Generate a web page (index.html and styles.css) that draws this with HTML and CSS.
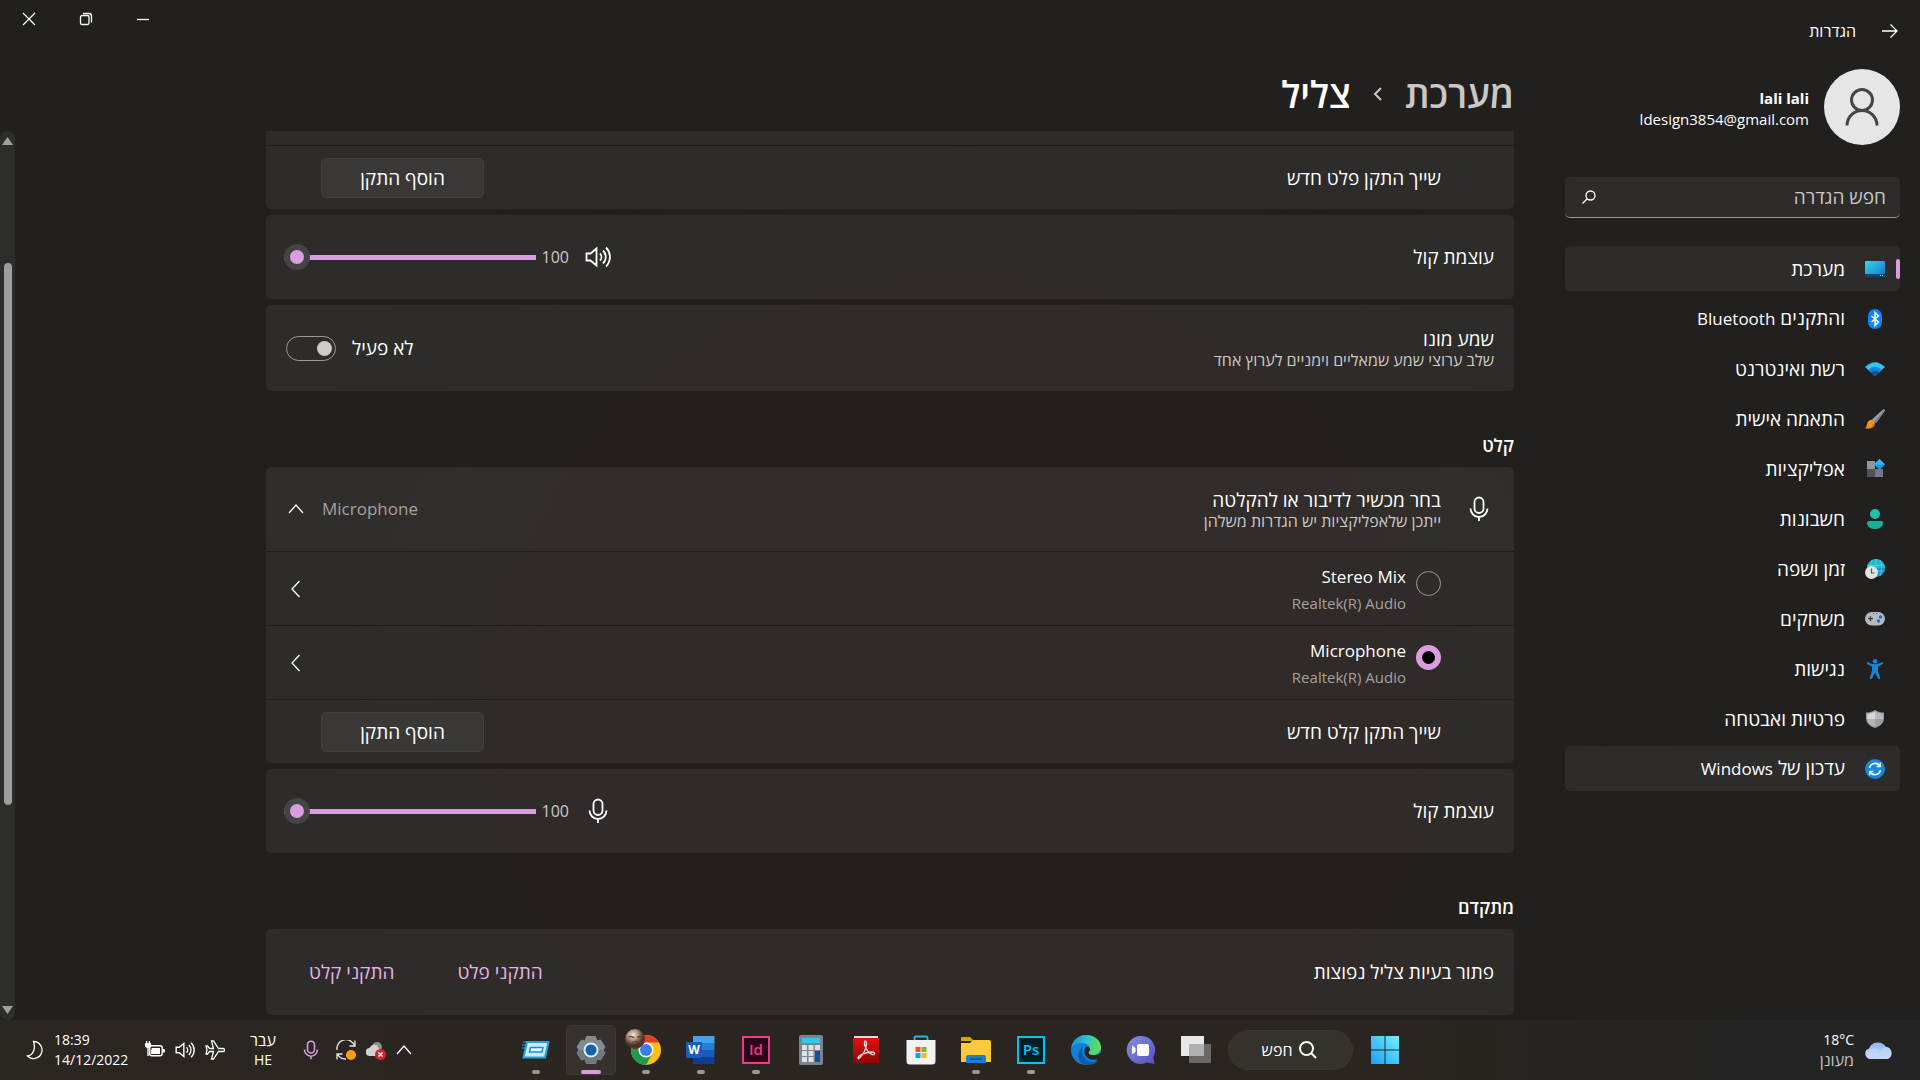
FILE: index.html
```html
<!DOCTYPE html>
<html lang="he" dir="rtl">
<head>
  <meta charset="UTF-8" />
  <title>הגדרות</title>
  <link rel="stylesheet" href="styles.css">
</head>
<body>
  <!-- shared icons -->
  <svg class="defs" width="0" height="0" aria-hidden="true">
    <symbol id="i-mic" viewBox="0 0 26 26">
      <rect x="8.5" y="1.5" width="9" height="15.5" rx="4.5" />
      <path d="M4.5 12.5a8.5 8.5 0 0 0 17 0M13 21v4" />
    </symbol>
    <symbol id="i-speaker" viewBox="0 0 26 26">
      <path d="M1.5 9.5v7h4l6 5V4.5l-6 5zM15 9.5a5 5 0 0 1 0 7M18 6.500a9 9 0 0 1 0 13M21 3.500a13.500 13.500 0 0 1 0 19" />
    </symbol>
    <symbol id="i-left" viewBox="0 0 16 18">
      <path d="M11.500 1 4 9l7.500 8" />
    </symbol>
    <symbol id="i-up" viewBox="0 0 16 16">
      <path d="M1 12l7-8 7 8" />
    </symbol>
  </svg>

  <header class="titlebar">
    <div class="app-title">
      <button class="plain" aria-label="חזרה"><svg class="line" width="16" height="16" viewBox="0 0 16 16"><path d="M0 8h15M8.500 1.500 15 8l-6.500 6.500" /></svg></button>
      <span>הגדרות</span>
    </div>
    <div class="win-buttons">
      <button class="plain" aria-label="מזער"><svg class="line" width="14" height="14" viewBox="0 0 14 14"><path d="M1 7.500h12" /></svg></button>
      <button class="plain" aria-label="שחזר"><svg class="line" width="14" height="14" viewBox="0 0 14 14"><rect x="1.500" y="3.500" width="8.500" height="9" rx="1.500" /><path d="M4 1.500h6a2.500 2.500 0 0 1 2.500 2.500v6.500" /></svg></button>
      <button class="plain" aria-label="סגור"><svg class="line" width="14" height="14" viewBox="0 0 14 14"><path d="M1 1l12 12M13 1 1 13" /></svg></button>
    </div>
  </header>

  <div class="layout">
    <!-- תפריט צד -->
    <aside class="sidebar">
      <div class="profile">
        <div class="avatar">
          <svg width="36" height="40" viewBox="0 0 36 40" fill="none" stroke="#454545" stroke-width="3"><circle cx="18" cy="13" r="10.500" /><path d="M3 38.500a15 15 0 0 1 30 0" /></svg>
        </div>
        <div class="profile-text">
          <div class="profile-name">lali lali</div>
          <div class="profile-mail">ldesign3854@gmail.com</div>
        </div>
      </div>

      <div class="search">
        <input type="text" placeholder="חפש הגדרה" aria-label="חפש הגדרה" />
        <svg class="line" width="14" height="14" viewBox="0 0 14 14"><circle cx="8.500" cy="5.500" r="4.500" /><path d="M5.200 8.800.500 13.500" /></svg>
      </div>

      <nav class="menu">
        <a href="#" class="menu-item active">
          <svg width="20" height="20" viewBox="0 0 20 20"><defs><linearGradient id="g-sys" x1="0" y1="0" x2="1" y2="1"><stop offset="0" stop-color="#35dce8" /><stop offset="1" stop-color="#1170c4" /></linearGradient></defs><rect y="2" width="20" height="16" rx="1" fill="url(#g-sys)" /><path d="M0 15h20v2a1 1 0 0 1-1 1H1a1 1 0 0 1-1-1z" fill="#0e4570" /><path d="M15 16h1v1h-1zM17 16h1v1h-1z" fill="#5fd0f0" /></svg>
          <span>מערכת</span>
        </a>
        <a href="#" class="menu-item">
          <svg width="20" height="20" viewBox="0 0 20 20"><rect x="3" width="14" height="20" rx="7" fill="#0a84ff" /><path d="M6.500 7 13.500 13l-3.500 3.500v-13L13.500 7l-7 6" fill="none" stroke="#fff" stroke-width="1.500" /></svg>
          <span>והתקנים <bdi class="en">Bluetooth</bdi></span>
        </a>
        <a href="#" class="menu-item">
          <svg width="20" height="20" viewBox="0 0 20 20"><path d="M0 8Q10-1.500 20 8L10 17z" fill="#35c3f3" /><path d="M3.200 11Q10 4.500 16.800 11L10 17z" fill="#1487d8" /><path d="M6 13.500q4-3.500 8 0L10 17z" fill="#0b52a0" /></svg>
          <span>רשת ואינטרנט</span>
        </a>
        <a href="#" class="menu-item">
          <svg width="20" height="20" viewBox="0 0 20 20"><path d="M18 .5c1.500-.8 2.500.3 1.500 1.800L11 14l-4-3.500z" fill="#9aa1a8" /><path d="M19.500 2.300 11 14l-1.800-1.600L19 .8z" fill="#7c838a" /><path d="M8.500 11.500c2.500 2.500 1.500 6.500-2 7.500-2 .6-4.500.8-6.500 0 2-.7 1.500-2 2-4 .8-3.200 4-5.500 6.500-3.500z" fill="#f5921e" /><path d="M8 14c.5 2-1 4-4 4.800 2.500.3 5-.8 5.500-3z" fill="#e0601a" /></svg>
          <span>התאמה אישית</span>
        </a>
        <a href="#" class="menu-item">
          <svg width="20" height="20" viewBox="0 0 20 20"><path d="M2 2h8v8H2z" fill="#9097a0" /><path d="M2 10h8v8H2z" fill="#505358" /><path d="M10 10h8v8h-8z" fill="#757b83" /><path d="M14.500 0 20 5.500 14.500 11 9 5.500z" fill="#1b9ae8" /><path d="M14.500 0 20 5.500H9z" fill="#35b5f0" /></svg>
          <span>אפליקציות</span>
        </a>
        <a href="#" class="menu-item">
          <svg width="20" height="20" viewBox="0 0 20 20"><circle cx="10" cy="5" r="5" fill="#22c0a8" /><path d="M3.500 12h13A1.500 1.500 0 0 1 18 13.500C18 17.500 15 20 10 20s-8-2.500-8-6.500A1.500 1.500 0 0 1 3.500 12z" fill="#16b09a" /></svg>
          <span>חשבונות</span>
        </a>
        <a href="#" class="menu-item">
          <svg width="20" height="20" viewBox="0 0 20 20"><circle cx="11" cy="9" r="9" fill="#1795cf" /><path d="M11 0a9 9 0 0 0-9 9h18a9 9 0 0 0-9-9z" fill="#20b8cd" /><path d="M11 0v18M2.500 6.500h17M2.500 12h17M7 1c-2 5-2 11 0 16M15 1c2 5 2 11 0 16" fill="none" stroke="#53d6e8" stroke-width=".7" /><circle cx="6.500" cy="13.500" r="6.500" fill="#e4e4e4" /><path d="M6.500 9.500V14h3" fill="none" stroke="#555" stroke-width="1.200" /></svg>
          <span>זמן ושפה</span>
        </a>
        <a href="#" class="menu-item">
          <svg width="20" height="20" viewBox="0 0 20 20"><rect y="3" width="20" height="13.500" rx="6.700" fill="#b4bac0" /><path d="M3 9.700h5M5.500 7.200v5" stroke="#3a3d42" stroke-width="1.300" /><circle cx="15.500" cy="8" r="1.700" fill="#1272cf" /><circle cx="13.500" cy="12" r="1.700" fill="#1272cf" /><path d="M8 4.500h1.200M11 4.500h1.200" stroke="#555" /></svg>
          <span>משחקים</span>
        </a>
        <a href="#" class="menu-item">
          <svg width="20" height="20" viewBox="0 0 20 20" fill="#1287dc"><circle cx="10" cy="2.200" r="2.200" /><path d="M2.500 3c3 1.500 5 2.200 7.500 2.200S14.500 4.500 17.500 3c.8.300.9 1.500.2 2L13 7.500V12l2.200 7c0 1.200-1.700 1.200-2.200.5L10 13.500 7 19.500c-.5.700-2.200.7-2.200-.5L7 12V7.500L2.300 5c-.7-.5-.6-1.700.2-2z" /></svg>
          <span>נגישות</span>
        </a>
        <a href="#" class="menu-item">
          <svg width="20" height="20" viewBox="0 0 20 20"><path d="M10 1c3 2 5.500 2.500 9 2.500V9c0 5-4 8.500-9 10-5-1.500-9-5-9-10V3.500C4.500 3.500 7 3 10 1z" fill="#9ba0a5" /><path d="M10 2.500c2.500 1.700 5 2.200 7.700 2.300V10H10z" fill="#b5babe" /><path d="M10 2.500C7.500 4.200 5 4.700 2.300 4.800V10H10z" fill="#d5d8db" /><path d="M10 10v7.600C6 16.300 2.600 13.500 2.300 10z" fill="#b2b6ba" /></svg>
          <span>פרטיות ואבטחה</span>
        </a>
        <a href="#" class="menu-item hover">
          <svg width="20" height="20" viewBox="0 0 20 20"><circle cx="10" cy="10" r="10" fill="#1189de" /><path d="M4.500 9A5.700 5.700 0 0 1 15 7.200M15.500 11A5.700 5.700 0 0 1 5 12.800" fill="none" stroke="#fff" stroke-width="1.500" /><path d="M15.300 3.800v3.700h-3.700M4.700 16.200v-3.700h3.700" fill="none" stroke="#fff" stroke-width="1.300" /></svg>
          <span>עדכון של <bdi class="en">Windows</bdi></span>
        </a>
      </nav>
    </aside>

    <!-- תוכן -->
    <main class="content">
      <h1 class="crumbs">
        <a href="#">מערכת</a>
        <svg width="10" height="14" viewBox="0 0 10 14"><path d="M8 1 2 7l6 6" fill="none" stroke="#c9c8c7" stroke-width="2" /></svg>
        <span>צליל</span>
      </h1>

      <div class="scroll-area">
        <section class="card cut">
          <div class="row sliver"></div>
          <div class="row short inset">
            <span>שייך התקן פלט חדש</span>
            <button class="btn">הוסף התקן</button>
          </div>
        </section>

        <section class="card">
          <div class="row">
            <label for="out-volume">עוצמת קול</label>
            <div class="volume">
              <svg class="line bold" width="26" height="26"><use href="#i-speaker" /></svg>
              <span class="volume-value">100</span>
              <input type="range" id="out-volume" min="0" max="100" value="100" />
            </div>
          </div>
        </section>

        <section class="card">
          <div class="row tall">
            <label for="mono" class="texts">
              <span>שמע מונו</span>
              <small>שלב ערוצי שמע שמאליים וימניים לערוץ אחד</small>
            </label>
            <div class="switch">
              <span>לא פעיל</span>
              <input type="checkbox" id="mono" />
            </div>
          </div>
        </section>

        <h2>קלט</h2>

        <section class="card">
          <div class="row lighter">
            <div class="device-head">
              <svg class="line bold" width="26" height="26"><use href="#i-mic" /></svg>
              <div class="texts">
                <span>בחר מכשיר לדיבור או להקלטה</span>
                <small>ייתכן שלאפליקציות יש הגדרות משלהן</small>
              </div>
            </div>
            <button class="plain expander">
              <span class="en">Microphone</span>
              <svg class="line" width="16" height="16"><use href="#i-up" /></svg>
            </button>
          </div>
          <div class="row device inset">
            <label class="radio">
              <input type="radio" name="input-device" />
              <span class="radio-text en">Stereo Mix<small>Realtek(R) Audio</small></span>
            </label>
            <button class="plain" aria-label="Stereo Mix"><svg class="line" width="16" height="18"><use href="#i-left" /></svg></button>
          </div>
          <div class="row device inset">
            <label class="radio">
              <input type="radio" name="input-device" checked />
              <span class="radio-text en">Microphone<small>Realtek(R) Audio</small></span>
            </label>
            <button class="plain" aria-label="Microphone"><svg class="line" width="16" height="18"><use href="#i-left" /></svg></button>
          </div>
          <div class="row short inset">
            <span>שייך התקן קלט חדש</span>
            <button class="btn">הוסף התקן</button>
          </div>
        </section>

        <section class="card">
          <div class="row">
            <label for="in-volume">עוצמת קול</label>
            <div class="volume">
              <svg class="line bold" width="26" height="26"><use href="#i-mic" /></svg>
              <span class="volume-value">100</span>
              <input type="range" id="in-volume" min="0" max="100" value="100" />
            </div>
          </div>
        </section>

        <h2>מתקדם</h2>

        <section class="card">
          <div class="row tall">
            <span>פתור בעיות צליל נפוצות</span>
            <div class="links">
              <a href="#">התקני פלט</a>
              <a href="#">התקני קלט</a>
            </div>
          </div>
        </section>
      </div>
    </main>

    <div class="scrollbar">
      <svg width="11" height="8" viewBox="0 0 11 8"><path d="M5.500 0 11 8H0z" /></svg>
      <div class="scroll-track"><div class="scroll-thumb"></div></div>
      <svg width="11" height="8" viewBox="0 0 11 8"><path d="M5.500 8 11 0H0z" /></svg>
    </div>
  </div>

  <!-- שורת המשימות -->
  <footer class="taskbar">
    <div class="weather">
      <svg width="30" height="20" viewBox="0 0 30 20"><defs><linearGradient id="g-cloud" x1="0" y1="0" x2="0" y2="1"><stop offset="0" stop-color="#8fb4f2" /><stop offset="1" stop-color="#cfddf8" /></linearGradient></defs><path d="M6 19a5.500 5.500 0 0 1-1-10.500A9.500 9.500 0 0 1 22 7a6.300 6.300 0 0 1 1.500 12z" fill="url(#g-cloud)" /><path d="M8 9c4-1 7 0 9 3 1-3 3-5 6-5a6.300 6.300 0 0 1 .5 12H6A5.500 5.500 0 0 1 3 9.500z" fill="#c3d5f7" opacity=".7" /></svg>
      <div>
        <div>18°C</div>
        <div class="dim">מעונן</div>
      </div>
    </div>

    <div class="apps">
      <button class="app" aria-label="התחל"><svg width="30" height="30" viewBox="0 0 30 30"><defs><linearGradient id="g-win" x1="1" y1="0" x2="0" y2="1"><stop offset="0" stop-color="#74f0ff" /><stop offset="1" stop-color="#1a9dfc" /></linearGradient></defs><path d="M1 1h13.500v13.500H1zM15.500 1H29v13.500H15.500zM1 15.500h13.500V29H1zM15.500 15.500H29V29H15.500z" fill="url(#g-win)" /></svg></button>
      <button class="task-search"><svg width="20" height="20" viewBox="0 0 20 20" fill="none" stroke="#fff" stroke-width="2"><circle cx="8.500" cy="8.500" r="6.500" /><path d="m13.300 13.300 4.700 4.700" /></svg><span>חפש</span></button>
      <button class="app" aria-label="תצוגת משימות"><svg width="30" height="30" viewBox="0 0 30 30"><path d="M8 9h22v19H8z" fill="#686868" /><path d="M0 1h23v20H0z" fill="#e8e8e8" /><path d="M8 9h15v12H8z" fill="#b0b0b0" /></svg></button>
      <button class="app" aria-label="צ'אט"><svg width="30" height="30" viewBox="0 0 30 30"><defs><linearGradient id="g-chat" x1="0" y1="0" x2="1" y2="1"><stop offset="0" stop-color="#8292dc" /><stop offset="1" stop-color="#5a4fc4" /></linearGradient></defs><path d="M15 1a14 14 0 1 0 6 26.500l7.500 1.500-1.200-7A14 14 0 0 0 15 1z" fill="url(#g-chat)" /><rect x="11" y="9" width="12" height="12" rx="2" fill="#fff" /><path d="M6 10.500 9.500 13v4L6 19.500z" fill="#fff" /></svg></button>
      <button class="app" aria-label="Edge"><svg width="30" height="30" viewBox="0 0 30 30"><defs><linearGradient id="g-edge" x1="0" y1=".3" x2="1" y2=".5"><stop offset="0" stop-color="#1c8ed8" /><stop offset=".5" stop-color="#33c3c8" /><stop offset="1" stop-color="#69e048" /></linearGradient></defs><circle cx="15" cy="15" r="15" fill="#1280d6" /><path d="M0 14C1 5 8 0 15 0c9 0 15 6 15 12 0 5-4 8-8 8-3 0-5-1-5-2s2-1.500 2-4c0-3-3-6-8-6-6 0-10 3-11 6z" fill="url(#g-edge)" /><path d="M12 12c-3 7 2 15 10 15 3 0 5-1 6-2-3 4-7 5-11 5-7 0-12-7-9-13 1-3 2-4 4-5z" fill="#0d5aa8" /><path d="M16.500 11.500c2 .5 2.800 2 2.500 3.500-.3 1.200-1.800 2-1.500 3 1 2.500 6 3.500 12.500 0v-1l2 9-3-1c1-1.500 1-2-.5-1.300-4 1.800-9 1.500-12-1-3.500-3-4-8-2-10.200.6-.7 1.300-1 2-1z" fill="#29241f" /></svg></button>
      <button class="app" aria-label="Photoshop"><svg width="28" height="28" viewBox="0 0 28 28"><rect x="1" y="1" width="26" height="26" fill="#001d26" stroke="#00c3f5" stroke-width="2" /><text x="14" y="19" text-anchor="middle" class="logo-text" fill="#00c3f5">Ps</text></svg><i class="dot"></i></button>
      <button class="app" aria-label="סייר הקבצים"><svg width="30" height="28" viewBox="0 0 30 28"><path d="M0 2a1 1 0 0 1 1-1h8l4 4H0z" fill="#e0a008" /><path d="M0 7h9l3-3h16a2 2 0 0 1 2 2v20H0z" fill="#ffc937" /><path d="M5 27v-6a2 2 0 0 1 2-2h16a2 2 0 0 1 2 2v6z" fill="#1480d6" /><path d="M9 23h12" stroke="#0b4f94" stroke-width="1.500" /></svg><i class="dot"></i></button>
      <button class="app" aria-label="Store"><svg width="30" height="30" viewBox="0 0 30 30"><path d="M8.500 6V3A1.500 1.500 0 0 1 10 1.500h10A1.500 1.500 0 0 1 21.500 3v3" fill="none" stroke="#2ab2ea" stroke-width="2" /><path d="M.5 5h29v21a3.500 3.500 0 0 1-3.500 3.500H4A3.500 3.500 0 0 1 .5 26z" fill="#f2f2f2" /><path d="M9.500 12h5v5h-5z" fill="#f05125" /><path d="M15.500 12h5v5h-5z" fill="#7fbb0a" /><path d="M9.500 18h5v5h-5z" fill="#05a6f0" /><path d="M15.500 18h5v5h-5z" fill="#fdb90b" /></svg></button>
      <button class="app" aria-label="Acrobat"><svg width="28" height="28" viewBox="0 0 28 28"><defs><linearGradient id="g-pdf" x1="0" y1="0" x2="0" y2="1"><stop offset="0" stop-color="#e31212" /><stop offset="1" stop-color="#8c0505" /></linearGradient></defs><path d="M2 0h24v3H2z" fill="#ddd" /><path d="M1 2h26v25H1z" fill="url(#g-pdf)" /><path d="M13 5c3 0 1 8-1.500 12S6 24 6 22c0-3 9-6 14-6 4 0 3 3 .5 2.500C16 17.500 11 9 13 5z" fill="none" stroke="#f3dada" stroke-width="1.300" /></svg></button>
      <button class="app" aria-label="מחשבון"><svg width="24" height="30" viewBox="0 0 24 30"><rect width="24" height="30" rx="2" fill="#7b858f" /><path d="M3 3h18v5H3z" fill="#36c5ee" /><path d="M3 10h5v5H3zM9.500 10h5v5h-5zM16 10h5v5h-5zM3 16h5v5H3zM9.500 16h5v5h-5zM3 22h5v5H3zM9.500 22h5v5h-5z" fill="#dde1e5" /><path d="M16 16h5v11h-5z" fill="#17509a" /></svg></button>
      <button class="app" aria-label="InDesign"><svg width="28" height="28" viewBox="0 0 28 28"><rect x="1" y="1" width="26" height="26" fill="#2b0417" stroke="#f0398a" stroke-width="2" /><text x="14" y="19" text-anchor="middle" class="logo-text" fill="#f0398a">Id</text></svg><i class="dot"></i></button>
      <button class="app" aria-label="Word"><svg width="30" height="28" viewBox="0 0 30 28"><path d="M7 0h21.500v7H7z" fill="#41a5ee" /><path d="M7 7h21.500v7H7z" fill="#2b7cd3" /><path d="M7 14h21.500v7H7z" fill="#185abd" /><path d="M7 21h21.500v7H7z" fill="#103f91" /><rect y="6" width="16" height="16" rx="1" fill="#1b5bbd" /><text x="8" y="18" text-anchor="middle" class="logo-text word" fill="#fff">W</text></svg><i class="dot"></i></button>
      <button class="app" aria-label="Chrome"><svg width="42" height="42" viewBox="0 0 42 42"><circle cx="21" cy="21" r="15" fill="#fbc116" /><path d="M8 13.500a15 15 0 0 1 26 0H21L14.500 25z" fill="#e33b2e" /><path d="M8 13.500A15 15 0 0 0 21 36l6.500-11.500h-12z" fill="#229a4c" /><circle cx="21" cy="21" r="7.500" fill="#fff" /><circle cx="21" cy="21" r="6" fill="#3b7de8" /><defs><radialGradient id="g-face" cx=".4" cy=".3"><stop offset="0" stop-color="#f3ead2" /><stop offset=".5" stop-color="#b09a80" /><stop offset="1" stop-color="#4c342a" /></radialGradient></defs><circle cx="10" cy="10" r="10" fill="url(#g-face)" /><path d="M4 8q3-1.500 5 1M12 8q3-1 5 0M7 14q4-3 9 0" stroke="#6a4236" stroke-width="1.500" fill="none" /></svg><i class="dot"></i></button>
      <button class="app current" aria-label="הגדרות"><svg width="30" height="30" viewBox="0 0 30 30"><path d="M10.500 1.500h9l1.500 4.500 3.500-1L29 12l-2 3 2 3-4.500 7-3.500-1-1.500 4.500h-9L9 24l-3.500 1L1 18l2-3-2-3 4.500-7L9 6z" fill="#838b93" stroke="#838b93" stroke-linejoin="round" /><path d="M1 18l2-3h24l2 3-4.500 7-3.500-1-1.500 4.500h-9L9 24l-3.500 1z" fill="#6f777f" /><circle cx="15" cy="15" r="7.500" fill="#e8e8e8" /><circle cx="15" cy="15" r="5.500" fill="#0f62ac" /></svg><i class="dot"></i></button>
      <button class="app" aria-label="הפעלה"><svg width="28" height="20" viewBox="0 0 28 20"><path d="M1 2h6M0 5h5M0 8h5" stroke="#35a7d8" /><path d="M5 2h21.500L23 17.500H1.500z" fill="#c6ecfa" stroke="#23a3dc" stroke-width="2" /><path d="M8.500 7.500h12.500l-1 4.500H7.500z" fill="#e6f8fd" stroke="#1f8fc6" stroke-width="1.500" /></svg><i class="dot"></i></button>
    </div>

    <div class="tray">
      <div class="tray-icons">
        <button class="plain" aria-label="סמלים מוסתרים"><svg class="line" width="16" height="16"><use href="#i-up" /></svg></button>
        <svg width="20" height="20" viewBox="0 0 20 20"><circle cx="11" cy="7" r="5" fill="#8e8e8e" /><path d="M4 16a4 4 0 0 1-.5-8A5 5 0 0 1 12 6.500L16 16z" fill="#d2d2d2" /><circle cx="14.500" cy="14.500" r="5.500" fill="#d8232e" /><path d="m12.500 12.500 4 4M16.500 12.500l-4 4" stroke="#fff" stroke-width="1.400" /></svg>
        <svg width="20" height="20" viewBox="0 0 20 20"><path d="M1 10A9 9 0 0 1 18.500 6M19 .5v5.500h-5.500M10 19a9 9 0 0 1-8.500-5M1 19.500V14h5.500" fill="none" stroke="#e8e8e8" stroke-width="1.300" /><circle cx="15" cy="15" r="5" fill="#ff9d0a" /></svg>
      </div>
      <svg class="line pink" width="20" height="20"><use href="#i-mic" /></svg>
      <div class="lang"><div>עבר</div><div class="lang-code">HE</div></div>
      <button class="plain status" aria-label="הגדרות מהירות">
        <svg class="line" width="20" height="20" viewBox="0 0 20 20"><path d="M18 8.500h-4.500L8.500 1H6.500l2 7.500h-4L2.500 6H1l1 4-1 4h1.500l2-2.500h4l-2 7.500h2l5-7.500H18c2.200 0 2.200-3 0-3z" /></svg>
        <svg class="line bold" width="20" height="20"><use href="#i-speaker" /></svg>
        <svg width="20" height="18" viewBox="0 0 20 18"><rect x="4.700" y="4.700" width="12.500" height="10" rx="2" fill="none" stroke="#fff" stroke-width="1.400" /><path d="M7 7h8v6H6V9zM18 8h1a1 1 0 0 1 1 1v1.500a1 1 0 0 1-1 1h-1zM1 0h1.200v2h1.600V0H5v2h1v2.500C6 6 5 7 3.700 7v8H2.300V7C1 7 0 6 0 4.500V2h1z" fill="#fff" /></svg>
      </button>
      <div class="notify">
        <div class="clock"><div>18:39</div><div>14/12/2022</div></div>
        <svg class="line" width="18" height="20" viewBox="0 0 18 20"><path d="M7.500 1.500A8.500 8.500 0 1 1 1.500 16C7 15 10 9 7.500 1.500z" /></svg>
      </div>
    </div>
  </footer>
</body>
</html>
```
FILE: styles.css
```css
* {
  box-sizing: border-box;
}

body {
  margin: 0;
  height: 100vh;
  display: flex;
  flex-direction: column;
  overflow: hidden;
  background: radial-gradient(ellipse 38% 62% at 50% 66%, #241f1c 0%, #241f1c 55%, #21201e 100%);
  color: #fff;
  font-family: "Open Sans", "Noto Sans", sans-serif;
  font-size: 19px;
  line-height: 24px;
}

a {
  color: inherit;
  text-decoration: none;
}

button,
input {
  font: inherit;
  color: inherit;
  margin: 0;
}

small {
  font-size: 16px;
  line-height: 20px;
  color: #cbc9c8;
}

/* טקסט באנגלית */
.en {
  font-size: 17px;
}

.en small {
  font-size: 15px;
}

.defs {
  position: absolute;
}

.plain {
  display: flex;
  align-items: center;
  padding: 0;
  border: 0;
  background: none;
}

.line {
  fill: none;
  stroke: #fff;
  stroke-width: 1.3;
  flex: none;
}

.line.bold {
  stroke-width: 1.8;
}

.line.pink {
  stroke: #dc9de0;
  stroke-width: 2;
}

/* כותרת החלון */
.titlebar {
  display: flex;
  justify-content: space-between;
  height: 62px;
  flex: none;
}

.app-title {
  display: flex;
  align-items: center;
  gap: 26px;
  padding-right: 22px;
  font-size: 16px;
}

.win-buttons {
  display: flex;
  height: 38px;
}

.win-buttons .plain {
  width: 57px;
  justify-content: center;
}

.layout {
  display: flex;
  flex: 1;
  min-height: 0;
}

/* תפריט צד */
.sidebar {
  width: 335px;
  margin-right: 20px;
  flex: none;
}

.profile {
  display: flex;
  align-items: center;
  gap: 15px;
  height: 90px;
}

.avatar {
  display: flex;
  align-items: center;
  justify-content: center;
  width: 76px;
  height: 76px;
  border-radius: 50%;
  background: #e6e6e6;
}

.profile-text {
  direction: ltr;
  padding-top: 4px;
  text-align: right;
  font-size: 15px;
  line-height: 21px;
}

.profile-name {
  font-weight: 700;
}

.search {
  display: flex;
  align-items: center;
  height: 41px;
  margin: 25px 0 28px;
  padding: 0 14px 0 17px;
  border-radius: 5px;
  border-bottom: 1px solid #9a9a98;
  background: #2d2c2a;
}

.search input {
  flex: 1;
  min-width: 0;
  padding: 0;
  border: 0;
  outline: 0;
  background: none;
}

.search input::placeholder {
  color: #c9c8c6;
  opacity: 1;
}

.menu {
  display: flex;
  flex-direction: column;
  gap: 5px;
}

.menu-item {
  display: flex;
  align-items: center;
  gap: 20px;
  height: 45px;
  padding-right: 15px;
  border-radius: 5px;
}

.menu-item.active,
.menu-item.hover {
  background: #2d2c2a;
}

.menu-item.active {
  position: relative;
}

.menu-item.active::before {
  content: "";
  position: absolute;
  right: 0;
  top: 13px;
  width: 4px;
  height: 20px;
  border-radius: 2px;
  background: #dc9de0;
}

/* אזור התוכן */
.content {
  display: flex;
  flex-direction: column;
  flex: 1;
  max-width: 1248px;
  margin-right: 51px;
}

h1 {
  display: flex;
  align-items: center;
  gap: 22px;
  height: 69px;
  margin: 0;
  padding-bottom: 6px;
  font-size: 37px;
  font-weight: 600;
  flex: none;
}

h1 a {
  color: #c9c8c7;
}

h2 {
  margin: 42px 0 10px;
  font-size: 18px;
  line-height: 24px;
  font-weight: 600;
}

.scroll-area {
  flex: 1;
  min-height: 0;
  overflow: hidden;
}

.card {
  margin-bottom: 6px;
  border-radius: 5px;
  background: rgba(255, 255, 255, 0.055);
}

.card.cut {
  border-radius: 0 0 5px 5px;
}

.row {
  display: flex;
  align-items: center;
  justify-content: space-between;
  height: 84px;
  padding: 0 20px;
}

.row + .row {
  border-top: 1px solid #1f1d1b;
}

.row.lighter {
  border-radius: 5px 5px 0 0;
  background: rgba(255, 255, 255, 0.01);
}

.row.sliver {
  height: 14px;
}

.row.short {
  height: 64px;
}

.row.device {
  height: 74px;
}

.row.tall {
  height: 86px;
}

.row.inset {
  padding-right: 73px;
}

.texts {
  display: flex;
  flex-direction: column;
  padding-top: 2px;
}

.texts span {
  line-height: 22px;
}

.btn {
  width: 163px;
  height: 40px;
  margin-left: 35px;
  padding: 0;
  border: 1px solid #403f3e;
  border-radius: 5px;
  background: #393837;
}

.volume {
  display: flex;
  align-items: center;
}

.volume-value {
  margin: 0 16px 0 5px;
  width: 28px;
  color: #cbc9c8;
  font-size: 16px;
}

input[type="range"] {
  appearance: none;
  width: 252px;
  height: 26px;
  margin-left: -2px;
  background: linear-gradient(#dc9de0, #dc9de0) center / 100% 5px no-repeat;
  border-radius: 3px;
}

input[type="range"]::-webkit-slider-thumb {
  appearance: none;
  width: 26px;
  height: 26px;
  border: 6px solid #454444;
  border-radius: 50%;
  background: #dc9de0;
}

.switch {
  display: flex;
  align-items: center;
  gap: 16px;
}

input[type="checkbox"] {
  appearance: none;
  display: flex;
  align-items: center;
  width: 50px;
  height: 25px;
  padding: 0 3px;
  border: 1px solid #9b9a99;
  border-radius: 13px;
}

input[type="checkbox"]::before {
  content: "";
  width: 15px;
  height: 15px;
  border-radius: 50%;
  background: #cdcccb;
}

.device-head {
  display: flex;
  align-items: center;
  gap: 25px;
  padding-right: 2px;
}

.expander {
  gap: 18px;
  color: #a3a1a0;
}

.row .plain {
  margin-left: 2px;
}

.radio {
  display: flex;
  align-items: center;
  gap: 10px;
}

.radio input {
  appearance: none;
  width: 25px;
  height: 25px;
  margin-bottom: 10px;
  border: 1px solid #9b9a99;
  border-radius: 50%;
}

.radio input:checked {
  border: 6px solid #dc9de0;
  background: #000;
}

.radio-text {
  display: flex;
  flex-direction: column;
  align-items: flex-start;
  padding-top: 2px;
  line-height: 26px;
}

.radio-text small {
  line-height: 26px;
  color: #a3a1a0;
}

.links {
  display: flex;
  gap: 63px;
  padding-left: 23px;
  color: #e3b3e8;
}

/* פס גלילה */
.scrollbar {
  display: flex;
  flex-direction: column;
  align-items: center;
  width: 15px;
  margin: 69px auto 0 0;
  padding: 6px 0;
  border-radius: 8px;
  background: #2d2d2c;
  fill: #a0a09f;
}

.scroll-track {
  flex: 1;
  padding-top: 118px;
}

.scroll-thumb {
  width: 8px;
  height: 73%;
  border-radius: 4px;
  background: #9d9d9d;
}

/* שורת המשימות */
.taskbar {
  display: grid;
  grid-template-columns: 1fr auto 1fr;
  align-items: center;
  height: 60px;
  flex: none;
  background: linear-gradient(to right, #2a2621, #2a2520 70%, #242424 92%);
  font-size: 14px;
  line-height: 20px;
}

.weather {
  display: flex;
  align-items: center;
  gap: 10px;
  padding-right: 26px;
}

.dim {
  color: #c3c3c3;
  font-size: 16px;
}

.apps {
  display: flex;
  align-items: center;
  gap: 5px;
}

.app {
  position: relative;
  display: flex;
  align-items: center;
  justify-content: center;
  width: 50px;
  height: 50px;
  padding: 0;
  border: 0;
  border-radius: 5px;
  background: none;
}

.app.current {
  background: #35312d;
  border: 1px solid #3d3935;
}

.dot {
  position: absolute;
  bottom: 1px;
  width: 8px;
  height: 4px;
  border-radius: 2px;
  background: #9b9894;
}

.current .dot {
  bottom: 0;
  width: 20px;
  background: #dc9de0;
}

.logo-text {
  font: 600 15px "Open Sans", sans-serif;
  direction: ltr;
}

.logo-text.word {
  font-size: 12px;
  font-weight: 700;
}

.task-search {
  display: flex;
  align-items: center;
  justify-content: center;
  gap: 6px;
  width: 125px;
  height: 40px;
  margin: 0 2px;
  padding: 0;
  border: 1px solid #3a3632;
  border-radius: 20px;
  background: #35312d;
  font-size: 16px;
}

.tray {
  display: flex;
  align-items: center;
  justify-content: flex-end;
  gap: 15px;
  padding-left: 26px;
}

.tray-icons,
.notify {
  display: flex;
  align-items: center;
  gap: 10px;
}

.lang {
  width: 46px;
  text-align: center;
  font-size: 16px;
}

.lang-code {
  font-size: 14px;
}

.status {
  gap: 10px;
}

.clock {
  direction: ltr;
  width: 76px;
}
```
